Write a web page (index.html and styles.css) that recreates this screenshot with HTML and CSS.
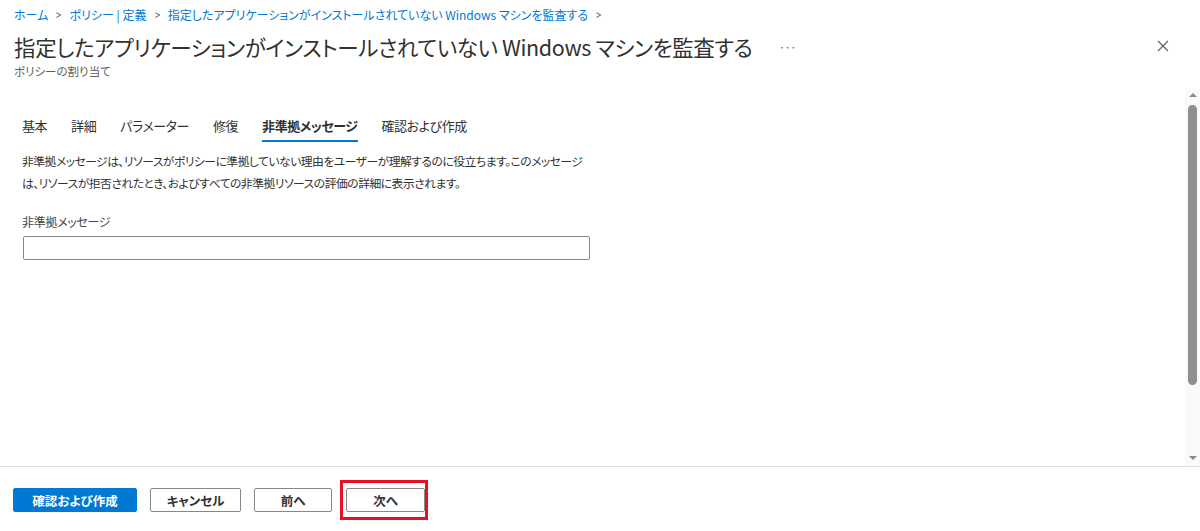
FILE: index.html
```html
<!DOCTYPE html>
<html lang="ja">
<head>
  <meta charset="UTF-8">
  <meta name="viewport" content="width=device-width, initial-scale=1.0">
  <title>ポリシーの割り当て</title>
<link rel="stylesheet" href="styles.css">
</head>
<body>
  <div class="blade">
    <header class="blade-header">
      <nav class="breadcrumb">
        <a href="#">ホーム</a>
        <span class="chevron">&gt;</span>
        <a href="#">ポリシー | 定義</a>
        <span class="chevron">&gt;</span>
        <a href="#">指定したアプリケーションがインストールされていない Windows マシンを監査する</a>
        <span class="chevron">&gt;</span>
      </nav>
      <div class="title-row">
        <h1>指定したアプリケーションがインストールされていない Windows マシンを監査する</h1>
        <span class="more">&middot;&middot;&middot;</span>
        <button class="close" aria-label="閉じる">
          <svg width="12" height="12" viewBox="0 0 12 12"><path d="M1 1 L11 11 M11 1 L1 11" stroke="#605e5c" stroke-width="1.1" fill="none"/></svg>
        </button>
      </div>
      <div class="subtitle">ポリシーの割り当て</div>
    </header>

    <div class="blade-body">
      <main class="content">
        <div class="tabs">
          <div class="tab">基本</div>
          <div class="tab">詳細</div>
          <div class="tab">パラメーター</div>
          <div class="tab">修復</div>
          <div class="tab active">非準拠メッセージ</div>
          <div class="tab">確認および作成</div>
        </div>
        <p class="description">非準拠メッセージは、リソースがポリシーに準拠していない理由をユーザーが理解するのに役立ちます。このメッセージは、リソースが拒否されたとき、およびすべての非準拠リソースの評価の詳細に表示されます。</p>
        <label class="field-label" for="message">非準拠メッセージ</label>
        <input class="field-input" id="message" type="text">
      </main>
      <div class="scrollbar">
        <span class="arrow up"></span>
        <span class="thumb"></span>
        <span class="arrow down"></span>
      </div>
    </div>

    <footer class="blade-footer">
      <button class="btn primary">確認および作成</button>
      <button class="btn cancel">キャンセル</button>
      <button class="btn">前へ</button>
      <span class="highlight">
        <button class="btn">次へ</button>
      </span>
    </footer>
  </div>
</body>
</html>
```

FILE: styles.css
```css
body, html {
  margin: 0;
  padding: 0;
  background-color: #fff;
  font-family: "Noto Sans CJK JP", "Noto Sans", sans-serif;
  font-feature-settings: "palt";
  color: #323130;
}

.blade {
  width: 1200px;
  height: 531px;
  display: flex;
  flex-direction: column;
}

.blade-header {
  height: 88px;
  padding: 0 14px;
  box-sizing: border-box;
}

.breadcrumb {
  height: 28px;
  display: flex;
  align-items: center;
  gap: 7px;
  font-size: 12px;
}

.breadcrumb a {
  color: #0078d4;
  text-decoration: none;
}

.chevron {
  color: #605e5c;
  font-size: 13px;
  transform: scaleX(0.7);
}

.title-row {
  height: 36px;
  display: flex;
  align-items: center;
}

h1 {
  margin: 0;
  font-size: 21.5px;
  font-weight: 400;
  letter-spacing: -0.35px;
  white-space: nowrap;
}

.more {
  margin-left: 26px;
  font-size: 12px;
  color: #605e5c;
  letter-spacing: -1px;
}

.close {
  margin-left: auto;
  margin-right: 17px;
  border: 0;
  background: none;
  padding: 0;
  display: flex;
}

.subtitle {
  font-size: 11.5px;
  color: #605e5c;
  line-height: 14px;
}

.blade-body {
  height: 378px;
  display: flex;
}

.content {
  flex: 1;
  padding: 26px 22px 0;
}

.tabs {
  display: flex;
  gap: 24px;
  font-size: 13px;
  letter-spacing: -0.45px;
}

.tab {
  line-height: 24px;
  padding-bottom: 2px;
  border-bottom: 2px solid transparent;
}

.tab.active {
  font-weight: 700;
  border-bottom-color: #0078d4;
}

.description {
  margin: 8px 0 0;
  width: 575px;
  font-size: 11.8px;
  letter-spacing: -0.5px;
  line-height: 22px;
}

.field-label {
  display: block;
  margin-top: 18px;
  font-size: 12px;
  letter-spacing: -0.3px;
  line-height: 20px;
  color: #484644;
}

.field-input {
  display: block;
  margin-top: 4px;
  margin-left: 1px;
  width: 567px;
  height: 24px;
  box-sizing: border-box;
  border: 1px solid #8a8886;
  border-radius: 2px;
}

.scrollbar {
  width: 15px;
  background-color: #fafafa;
  display: flex;
  flex-direction: column;
  align-items: center;
}

.arrow {
  width: 0;
  height: 0;
  border-left: 4px solid transparent;
  border-right: 4px solid transparent;
}

.arrow.up {
  margin-top: 5px;
  border-bottom: 4px solid #8a8a8a;
}

.arrow.down {
  margin-top: auto;
  margin-bottom: 6px;
  border-top: 4px solid #8a8a8a;
}

.thumb {
  margin-top: 8px;
  width: 9px;
  height: 280px;
  border-radius: 5px;
  background-color: #8f8f8f;
}

.blade-footer {
  border-top: 1px solid #e1dfdd;
  padding: 13px 13px 0;
  display: flex;
  align-items: center;
  gap: 13px;
}

.btn {
  height: 24px;
  width: 78px;
  padding: 0;
  border: 1px solid #8a8886;
  border-radius: 2px;
  background-color: #fff;
  color: #323130;
  font-family: inherit;
  font-feature-settings: "palt";
  font-size: 12.5px;
  font-weight: 700;
  white-space: nowrap;
}

.btn.primary {
  background-color: #0078d4;
  border-color: #0078d4;
  color: #fff;
  width: 124px;
}

.btn.cancel {
  width: 91px;
}

.highlight {
  margin-left: -5px;
  padding: 5px 0 5px 3px;
  border: 3px solid #e81123;
  display: flex;
}

.highlight .btn {
  width: 79px;
}
```
